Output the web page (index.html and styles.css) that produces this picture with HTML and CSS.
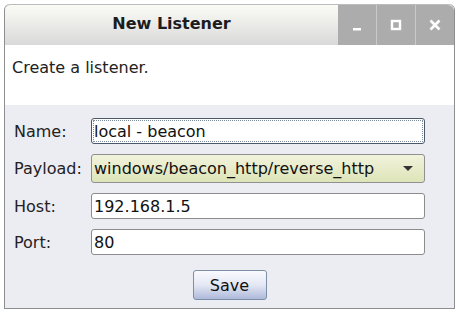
FILE: index.html
```html
<!DOCTYPE html>
<html lang="en">
<head>
    <meta charset="UTF-8">
    <title>New Listener</title>
    <link rel="stylesheet" href="styles.css">
</head>
<body>

    <div class="window">
        <div class="titlebar">
            <div class="title">New Listener</div>
            <div class="controls">
                <div class="ctl">
                    <svg width="14" height="14" viewBox="0 0 14 14"><rect x="3" y="10" width="8" height="2.5" fill="#fff"/></svg>
                </div>
                <div class="ctl">
                    <svg width="14" height="14" viewBox="0 0 14 14"><rect x="3" y="3" width="8" height="8" fill="none" stroke="#fff" stroke-width="2.4"/></svg>
                </div>
                <div class="ctl">
                    <svg width="14" height="14" viewBox="0 0 14 14"><path d="M2.5 2.5 L11.5 11.5 M11.5 2.5 L2.5 11.5" stroke="#fff" stroke-width="2.6"/></svg>
                </div>
            </div>
        </div>

        <div class="desc">Create a listener.</div>

        <form class="form">
            <div class="row">
                <label for="name">Name:</label>
                <input type="text" id="name" class="field focused" value="local - beacon">
            </div>
            <div class="row">
                <label>Payload:</label>
                <div class="combo">
                    <span>windows/beacon_http/reverse_http</span>
                    <span class="arrow"></span>
                </div>
            </div>
            <div class="row">
                <label for="host">Host:</label>
                <input type="text" id="host" class="field" value="192.168.1.5">
            </div>
            <div class="row">
                <label for="port">Port:</label>
                <input type="text" id="port" class="field" value="80">
            </div>
            <div class="actions">
                <button type="button">Save</button>
            </div>
        </form>
    </div>

</body>
</html>
```

FILE: styles.css
```css
body {
    margin: 0;
    background-color: #fff;
    font-family: "DejaVu Sans", sans-serif;
    color: #222;
}

.window {
    width: 449px;
    height: 304px;
    margin: 4px 0 0 4px;
    border: 1px solid #8e8e8e;
    border-top: none;
    border-radius: 6px 6px 0 0;
    background-color: #ececf3;
    display: flex;
    flex-direction: column;
}

.titlebar {
    height: 40px;
    display: flex;
    background: linear-gradient(#fbfbf6, #d9d9d9);
    border-top: 1px solid #bcbcbc;
    border-radius: 6px 6px 0 0;
}

.title {
    flex: 1;
    text-align: center;
    font-weight: bold;
    font-size: 16px;
    line-height: 38px;
    color: #1c1c1c;
}

.controls {
    width: 116px;
    display: flex;
    background-color: #acacac;
    border-radius: 0 6px 0 0;
}

.ctl {
    flex: 1;
    display: flex;
    align-items: center;
    justify-content: center;
    border-left: 1px solid #cacaca;
}

.ctl:first-child {
    border-left: none;
}

.desc {
    height: 60px;
    box-sizing: border-box;
    background-color: #fff;
    padding: 13px 7px;
    font-size: 16px;
}

.form {
    padding: 13px 0 0 9px;
}

.row {
    display: flex;
    align-items: center;
    margin-bottom: 10px;
}

label {
    width: 77px;
    font-size: 16px;
    color: #222;
}

.field {
    width: 334px;
    height: 26px;
    box-sizing: border-box;
    border: 1px solid #8c8c8c;
    border-radius: 3px;
    padding: 0 2px;
    font-family: "DejaVu Sans", sans-serif;
    font-size: 16px;
    color: #111;
    background-color: #fff;
}

.focused {
    border: 1px solid #4a5a6a;
    outline: 1px dotted #7c8a9c;
    outline-offset: -3px;
}

.combo {
    width: 334px;
    height: 29px;
    box-sizing: border-box;
    border: 1px solid #909090;
    border-radius: 3px;
    padding: 0 2px;
    display: flex;
    align-items: center;
    justify-content: space-between;
    font-size: 16px;
    color: #111;
    background: linear-gradient(#f2f3dc, #dde4b8);
}

.arrow {
    width: 0;
    height: 0;
    margin-right: 9px;
    border-left: 5px solid transparent;
    border-right: 5px solid transparent;
    border-top: 5px solid #333;
}

.actions {
    display: flex;
    justify-content: center;
    padding-top: 5px;
    padding-right: 9px;
}

button {
    width: 74px;
    height: 30px;
    border: 1px solid #7d8fa6;
    border-radius: 3px;
    background: linear-gradient(#fafafe, #e4e8f4 50%, #aeb9da);
    font-family: "DejaVu Sans", sans-serif;
    font-size: 16px;
    color: #111;
}
```
